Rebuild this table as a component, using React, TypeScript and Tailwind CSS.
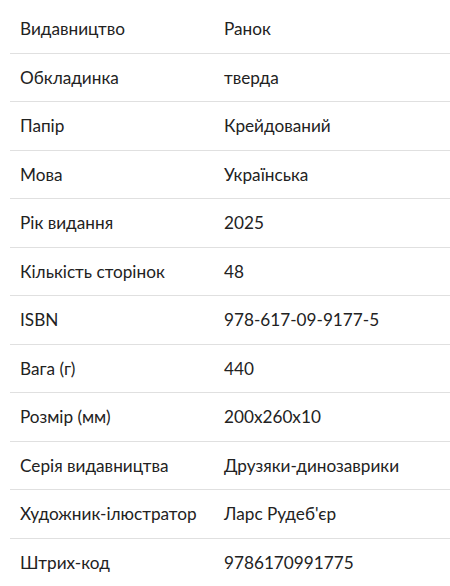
const rows: [string, string][] = [
  ["Видавництво", "Ранок"],
  ["Обкладинка", "тверда"],
  ["Папір", "Крейдований"],
  ["Мова", "Українська"],
  ["Рік видання", "2025"],
  ["Кількість сторінок", "48"],
  ["ISBN", "978-617-09-9177-5"],
  ["Вага (г)", "440"],
  ["Розмір (мм)", "200x260x10"],
  ["Серія видавництва", "Друзяки-динозаврики"],
  ["Художник-ілюстратор", "Ларс Рудеб'єр"],
  ["Штрих-код", "9786170991775"],
];

export default function App() {
  return (
    <div className="min-h-screen bg-white pt-[5px] pl-[10px] font-['Lato','Liberation_Sans',sans-serif] text-[17.2px] text-[#222222]">
      <div className="flex flex-col">
        {rows.map(([label, value]) => (
          <div
            key={label}
            className="flex border-b border-[#e0e0e0] py-[14px] leading-[19.5px]"
          >
            <div className="w-[204px] shrink-0 pl-[10px]">{label}</div>
            <div className="pl-[10px]">{value}</div>
          </div>
        ))}
      </div>
    </div>
  );
}
